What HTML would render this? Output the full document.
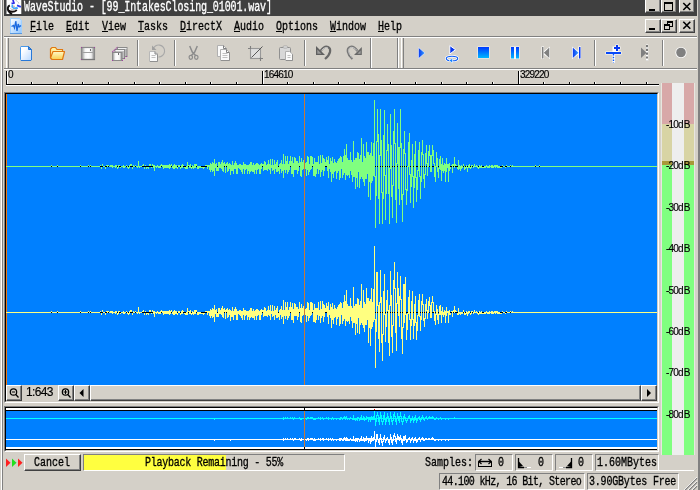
<!DOCTYPE html>
<html>
<head>
<meta charset="utf-8">
<title>WaveStudio</title>
<style>
html,body{margin:0;padding:0}
body{width:700px;height:490px;overflow:hidden;background:#d4d0c8;position:relative;font-family:"Liberation Sans",sans-serif}
.a{position:absolute}
.g{position:absolute;will-change:transform;font:10px/10px "Liberation Mono",monospace;white-space:pre;transform:scaleY(1.3);transform-origin:0 0;color:#000;-webkit-text-stroke:0.25px currentColor}
.s{position:absolute;will-change:transform;font:10px/10px "Liberation Sans",sans-serif;white-space:pre;color:#000;letter-spacing:-0.8px;-webkit-text-stroke:0.15px #000}
.btn{position:absolute;background:#d4d0c8;box-sizing:border-box;border:1px solid;border-color:#fff #404040 #404040 #fff;box-shadow:inset -1px -1px 0 #808080}
.sunk{position:absolute;box-sizing:border-box;border:1px solid;border-color:#808080 #fff #fff #808080}
</style>
</head>
<body>
<!-- window frame -->
<div class="a" style="left:1px;top:0;width:1px;height:490px;background:#fff"></div>
<div class="a" style="left:2px;top:0;width:1px;height:490px;background:#808080"></div>
<div class="a" style="left:698px;top:0;width:2px;height:490px;background:#808080"></div>

<!-- title bar -->
<div class="a" id="title" style="left:4px;top:0;width:693px;height:16px;background:#404040"></div>
<div class="g" style="left:24px;top:1px;color:#fff;letter-spacing:-0.1px;transform:scaleY(1.38)">WaveStudio - [99_IntakesClosing_01001.wav]</div>
<!-- title buttons -->
<div class="btn" style="left:645px;top:-2px;width:16px;height:15px"></div>
<div class="btn" style="left:661px;top:-2px;width:16px;height:15px"></div>
<div class="btn" style="left:679px;top:-2px;width:16px;height:15px"></div>

<!-- menu bar -->
<div class="g" style="left:30px;top:21px">File  Edit  View  Tasks  DirectX  Audio  Options  Window  Help</div>
<div class="a" style="left:30px;top:31px;width:6px;height:1px;background:#000"></div><div class="a" style="left:66px;top:31px;width:6px;height:1px;background:#000"></div><div class="a" style="left:102px;top:31px;width:6px;height:1px;background:#000"></div><div class="a" style="left:138px;top:31px;width:6px;height:1px;background:#000"></div><div class="a" style="left:180px;top:31px;width:6px;height:1px;background:#000"></div><div class="a" style="left:234px;top:31px;width:6px;height:1px;background:#000"></div><div class="a" style="left:276px;top:31px;width:6px;height:1px;background:#000"></div><div class="a" style="left:330px;top:31px;width:6px;height:1px;background:#000"></div><div class="a" style="left:378px;top:31px;width:6px;height:1px;background:#000"></div>
<div class="btn" style="left:645px;top:19px;width:16px;height:14px"></div>
<div class="btn" style="left:661px;top:19px;width:16px;height:14px"></div>
<div class="btn" style="left:679px;top:19px;width:16px;height:14px"></div>
<div class="a" style="left:4px;top:36px;width:693px;height:1px;background:#808080"></div>
<div class="a" style="left:4px;top:37px;width:693px;height:1px;background:#fff"></div>

<!-- toolbar -->
<div class="a" style="left:4px;top:68px;width:693px;height:1px;background:#808080"></div>
<div class="a" style="left:4px;top:69px;width:693px;height:1px;background:#fff"></div>

<svg class="a" id="topsvg" style="left:0;top:0" width="700" height="70" viewBox="0 0 700 70">
<defs>
<linearGradient id="gdoc" x1="0" y1="0" x2="1" y2="1"><stop offset="0.25" stop-color="#fff"/><stop offset="1" stop-color="#b8d8ff"/></linearGradient>
<linearGradient id="gfold" x1="0" y1="0" x2="0" y2="1"><stop offset="0" stop-color="#fffac8"/><stop offset="1" stop-color="#f8d050"/></linearGradient>
<linearGradient id="gblue" x1="0" y1="0" x2="0" y2="1"><stop offset="0" stop-color="#0038ff"/><stop offset="1" stop-color="#00b8ff"/></linearGradient>
<linearGradient id="gblueh" x1="0" y1="0" x2="1" y2="0"><stop offset="0" stop-color="#0838f0"/><stop offset="1" stop-color="#38a0ff"/></linearGradient>
<linearGradient id="ggrey" x1="0" y1="0" x2="1" y2="0"><stop offset="0" stop-color="#8c8c8c"/><stop offset="0.28" stop-color="#f4f4f4"/><stop offset="0.5" stop-color="#fff"/><stop offset="0.75" stop-color="#f0f0f0"/><stop offset="1" stop-color="#808080"/></linearGradient>
<linearGradient id="gmdoc" x1="0" y1="0" x2="1" y2="1"><stop offset="0" stop-color="#ffffff"/><stop offset="1" stop-color="#8cc4ff"/></linearGradient>
</defs>
<!-- title icon -->
<g id="ticon">
<rect x="6.5" y="0" width="14.8" height="14" fill="#fff"/>
<path d="M9.8 5.3 C7.5 6.5 7.3 9 8.6 11 C9.5 12.5 11 13.5 12 14" fill="none" stroke="#101010" stroke-width="2"/>
<path d="M8 10.3 C11 12.3 14.5 12 16.8 10" fill="none" stroke="#181010" stroke-width="1.9"/>
<path d="M10.5 8.5 C12 10 14 10.3 15.5 9.7" fill="none" stroke="#b0b0b0" stroke-width="1"/>
<path d="M12.8 0 L13.8 2 M11.5 3.3 L14.8 2.8" fill="none" stroke="#2828e8" stroke-width="1.7"/>
<path d="M17 5.3 L20.8 6.8" fill="none" stroke="#3040f0" stroke-width="1.8"/>
<path d="M16 0.3 L19.5 3.8" fill="none" stroke="#a8a8a8" stroke-width="1" stroke-dasharray="1 0.6"/>
<path d="M12.5 4.5 L12.2 6.8 L14 8.3 L16.5 7.8 L18 8.5" fill="none" stroke="#40a8ff" stroke-width="1.7"/>
<circle cx="14" cy="6.5" r="0.9" fill="#d0b0a0"/>
</g>
<!-- menu doc icon -->
<g id="micon">
<path d="M10.5 18.5 H19.5 L21.5 20.5 V33.5 H10.5 Z" fill="url(#gmdoc)" stroke="#a0d0ff" stroke-width="1"/>
<path d="M10 33.5 H22" stroke="#5898e0" stroke-width="1"/>
<path d="M11.5 26.5 L13.5 25.5 L14.5 28 L15.8 21 L17 31 L18.2 24 L19.2 27 L21 25.5" fill="none" stroke="#1868e0" stroke-width="1.3"/>
</g>
<!-- caption buttons glyphs -->
<g fill="#000" shape-rendering="crispEdges">
<rect x="649" y="9" width="6" height="2"/>
<path d="M664 2h9v9h-9z M665 4v6h7v-6z" fill-rule="evenodd"/>
<rect x="649" y="28" width="6" height="2"/>
<path d="M667 21h6v6h-6z M668 23v3h4v-3z" fill-rule="evenodd"/>
<rect x="664" y="24" width="6" height="6" fill="#d4d0c8"/>
<path d="M664 24h6v6h-6z M665 26v3h4v-3z" fill-rule="evenodd"/>
</g>
<g stroke="#000" stroke-width="1.6" fill="none">
<path d="M683.3 3 l7 7 M690.3 3 l-7 7"/>
<path d="M683.3 21.8 l7 7 M690.3 21.8 l-7 7"/>
</g>
<!-- toolbar grippers/separators -->
<g shape-rendering="crispEdges">
<rect x="6" y="38" width="1" height="30" fill="#fff"/><rect x="8" y="38" width="1" height="30" fill="#808080"/>
<rect x="370" y="38" width="1" height="30" fill="#808080"/><rect x="371" y="38" width="1" height="30" fill="#fff"/>
<rect x="397" y="38" width="1" height="30" fill="#808080"/><rect x="398" y="38" width="1" height="30" fill="#fff"/>
<rect x="401" y="38" width="1" height="30" fill="#fff"/><rect x="403" y="38" width="1" height="30" fill="#808080"/>
<g id="seps">
<rect x="137" y="40" width="1" height="26" fill="#808080"/><rect x="138" y="40" width="1" height="26" fill="#fff"/>
<rect x="174" y="40" width="1" height="26" fill="#808080"/><rect x="175" y="40" width="1" height="26" fill="#fff"/>
<rect x="304" y="40" width="1" height="26" fill="#808080"/><rect x="305" y="40" width="1" height="26" fill="#fff"/>
<rect x="594" y="40" width="1" height="26" fill="#808080"/><rect x="595" y="40" width="1" height="26" fill="#fff"/>
<rect x="662" y="40" width="1" height="26" fill="#808080"/><rect x="663" y="40" width="1" height="26" fill="#fff"/>
</g>
</g>
<!-- new -->
<path d="M21 46.5 H28.5 L31.5 49.5 V59.5 Q31.5 60.5 30.5 60.5 H21.5 Q20.5 60.5 20.5 59.5 V47.5 Q20.5 46.5 21.5 46.5 Z" fill="url(#gdoc)" stroke="#4898e8" stroke-width="1"/>
<path d="M28.5 46.5 V49.5 H31.5 Z" fill="#4890e8" stroke="#2070d0" stroke-width="1"/>
<path d="M21 60.5 H31 M31.5 50 V60" stroke="#2878d8" stroke-width="1" fill="none"/>
<!-- open -->
<path d="M50.5 58 V49 L52 47.5 H55.5 L57 49.5 H62.5 V52" fill="#fff0a0" stroke="#e07810" stroke-width="1.2"/>
<path d="M52 59.5 L50.5 58 L53 51.5 H64.5 L62.5 59.5 Z" fill="url(#gfold)" stroke="#e07810" stroke-width="1.2" stroke-linejoin="round"/>
<!-- save -->
<g id="save">
<rect x="81.5" y="47.5" width="13" height="12" fill="url(#ggrey)" stroke="#8a8a8a" stroke-width="1.2"/>
<path d="M82 52.5 H94" stroke="#a0a0a0" stroke-width="1"/><path d="M81 59.5 H95" stroke="#787878" stroke-width="1.2"/>
<rect x="90" y="49" width="1" height="2" fill="#707070"/>
<rect x="81" y="47" width="1" height="1" fill="#a040a0"/><rect x="94" y="47" width="1" height="1" fill="#a040a0"/><rect x="81" y="59" width="1" height="1" fill="#a040a0"/>
</g>
<!-- save all -->
<g id="saveall">
<rect x="117.5" y="47.5" width="9.5" height="9" fill="#b8b8b8" stroke="#8a8a8a"/>
<path d="M118 48.5 H126.5" stroke="#f0f0f0"/>
<rect x="115" y="49.5" width="9.5" height="9" fill="#c0c0c0" stroke="#8a8a8a"/>
<path d="M115.5 50.5 H124" stroke="#f4f4f4"/>
<rect x="112.5" y="52.5" width="9.5" height="8" fill="url(#ggrey)" stroke="#8a8a8a"/>
<path d="M112.5 52 L117.5 47" stroke="#a040a0" stroke-width="1.2" stroke-dasharray="1 0.7"/>
<rect x="118" y="53" width="1" height="2" fill="#707070"/>
<rect x="126" y="56" width="1" height="1" fill="#a040a0"/><rect x="124" y="58" width="1" height="1" fill="#a040a0"/><rect x="112" y="60" width="1" height="1" fill="#a040a0"/><rect x="122" y="60" width="1" height="1" fill="#a040a0"/>
</g>
<!-- revert -->
<g id="revert" fill="none">
<path d="M152.8 49.5 A6 6 0 1 1 158.4 57" stroke="#a8a8a8" stroke-width="1.1"/>
<path d="M152 45.5 V50 H156.5 Z" fill="#a0a0a0"/>
<path d="M149.5 51.5 H155 L157.5 54 V61.5 H149.5 Z" fill="#fafafa" stroke="#b8b8b8"/>
<path d="M150 61.5 H157.5 V54.5" stroke="#909090"/>
<path d="M151.5 55.5 H155.5 M151.5 57.5 H155.5" stroke="#c0c0c0"/>
<path d="M155 51.5 V54 H157.5" stroke="#808080"/>
</g>
<!-- cut -->
<g id="cut" fill="none" stroke="#8c8c8c">
<path d="M189.7 46 L192.3 52 L195.6 55.5 M197.3 46 L194.7 52 L191.4 55.5" stroke-width="1.5"/>
<ellipse cx="190.8" cy="57.3" rx="1.7" ry="2" stroke-width="1.2"/><ellipse cx="196.3" cy="57.3" rx="1.7" ry="2" stroke-width="1.2"/>
</g>
<!-- copy -->
<g id="copy">
<path d="M217.5 45.5 H223.5 L226.5 48.5 V56.5 H217.5 Z" fill="#fafafa" stroke="#b0b0b0"/>
<path d="M223.5 45.5 V48.5 H226.5" fill="none" stroke="#808080"/>
<path d="M220.5 49.5 H226.5 L229.5 52.5 V60.5 H220.5 Z" fill="#fafafa" stroke="#b0b0b0"/>
<path d="M226.5 49.5 V52.5 H229.5" fill="none" stroke="#808080"/>
<path d="M221 60.5 H229.5 V53" fill="none" stroke="#909090"/>
<path d="M222.5 53.5 H227.5 M222.5 55.5 H227.5 M222.5 57.5 H227.5" stroke="#c0c0c0"/>
</g>
<!-- crop -->
<g id="crop" fill="none">
<rect x="250.5" y="48.5" width="10" height="10" fill="#dedede" stroke="#989898" stroke-width="1.1"/>
<path d="M248 48.5 H251 M250.5 46 V49 M259.5 58.5 H263 M260.5 57.5 V61" stroke="#808080" stroke-width="1.1"/>
<path d="M251.5 57.5 L262.5 46.5" stroke="#585858" stroke-width="1"/>
</g>
<!-- paste -->
<g id="paste">
<rect x="279.5" y="47.5" width="11" height="12" rx="1" fill="#d8d8d8" stroke="#909090"/>
<rect x="283" y="46" width="4.5" height="2" rx="1" fill="#eee" stroke="#a0a0a0" stroke-width="0.8"/>
<path d="M285.5 51.5 H289.5 L292.5 54 V60.5 H285.5 Z" fill="#fafafa" stroke="#b0b0b0"/>
<path d="M286 60.5 H292.5 V54.5" fill="none" stroke="#909090"/>
<path d="M287.5 55.5 H290.5 M287.5 57.5 H290.5" stroke="#c0c0c0"/>
</g>
<!-- undo -->
<g id="undo">
<path d="M316 46 V55 H325 Z" fill="#606060"/>
<path d="M317.3 49.5 V53.7 H321.5 Z" fill="#9a9a9a"/>
<path d="M320.5 51 C323 47.5 326 46.2 328 47 C331.5 48.5 331 54 325 59" fill="none" stroke="#686868" stroke-width="2.2"/>
<path d="M321.5 50.5 C323.5 47.900 326 47 327.800 47.700" fill="none" stroke="#e0e0e0" stroke-width="0.8"/>
</g>
<!-- redo -->
<g id="redo">
<path d="M361.8 47 V55 H354 Z" fill="#686868"/>
<path d="M360.6 50.5 V53.8 H357.4 Z" fill="#a0a0a0"/>
<path d="M357.5 51 C355 47.5 352 46.2 350 47 C346.5 48.5 347 54 352.5 59" fill="none" stroke="#787878" stroke-width="2.3"/>
<path d="M357 50.5 C355 47.8 352 46.8 350.2 47.6 C347.5 49 348 53.5 352.8 58.3" fill="none" stroke="#e8e8e8" stroke-width="0.7"/>
</g>
<!-- play -->
<path d="M418.5 47.5 V58.5 L425 53 Z" fill="url(#gblueh)" stroke="#e8f0ff" stroke-width="0.6"/>
<!-- play loop -->
<g id="ploop">
<path d="M449.8 45.5 V54 L455.5 49.7 Z" fill="#0838f0" stroke="#fff" stroke-width="1"/>
<ellipse cx="452" cy="58.5" rx="5.7" ry="2.3" fill="none" stroke="#fff" stroke-width="2.6"/>
<ellipse cx="452" cy="58.5" rx="5.7" ry="2.3" fill="none" stroke="#1060f8" stroke-width="1.1"/>
<path d="M449 60.5 L452.5 58.3 V63 Z" fill="#1080ff" stroke="#fff" stroke-width="0.6"/>
</g>
<!-- stop -->
<rect x="477.5" y="46.5" width="12" height="12" fill="#fff" opacity="0.85"/>
<rect x="478" y="47" width="11" height="11" fill="url(#gblue)"/>
<!-- pause -->
<rect x="510.5" y="46.5" width="9" height="12.5" fill="#fff" opacity="0.85"/>
<rect x="511" y="47" width="3" height="11.5" fill="url(#gblue)"/><rect x="516" y="47" width="3" height="11.5" fill="url(#gblue)"/>
<!-- prev -->
<g id="prev">
<path d="M541.5 46.5 H544 V51 L550 46.5 V59 L544 54.5 V59 H541.5 Z" fill="#fff"/>
<rect x="542" y="47" width="1.5" height="11.5" fill="#808080"/>
<path d="M549.3 47.5 V58 L543.8 52.8 Z" fill="#808080"/>
</g>
<!-- next -->
<g id="next">
<path d="M572 46.5 L578.3 51 V46.5 H581 V59 H578.3 V54.5 L572 59 Z" fill="#fff"/>
<path d="M572.8 47.5 V58 L578.5 52.8 Z" fill="url(#gblueh)"/>
<rect x="579" y="47" width="1.5" height="11.5" fill="#0838f0"/>
</g>
<!-- add marker -->
<g id="addm">
<path d="M605.5 51.5 H612.5 V46.5 H615.5 V44.5 H618.5 V46.5 H620.5 V49.5 H618.5 V51.5 H621.5 V54.5 H615 V63 H612.5 V54.5 H605.5 Z" fill="#fff"/>
<rect x="606" y="52" width="15" height="2" fill="#0848f8"/>
<rect x="614" y="47" width="6" height="2" fill="#0838f0"/><rect x="616" y="45" width="2" height="6" fill="#0838f0"/>
<path d="M613.5 54 V62.5" stroke="#0858ff" stroke-width="1.400" stroke-dasharray="1.5 1.2"/>
</g>
<!-- marker disabled -->
<g id="mark">
<path d="M641 47.5 V58 L646.5 52.8 Z" fill="#808080"/>
<rect x="646" y="44.5" width="2.2" height="16.5" fill="#fff"/>
<path d="M647 45 V60.5" stroke="#202020" stroke-width="1.2" stroke-dasharray="2.2 1.6"/>
</g>
<!-- record -->
<circle cx="681" cy="52.5" r="5.6" fill="#fff"/>
<circle cx="681" cy="52.5" r="4.8" fill="#808080"/>
</svg>
<!-- ruler -->
<div class="a" id="ruler" style="left:0;top:70px;width:700px;height:18px">
<div class="a" style="left:6px;top:14px;width:653px;height:1px;background:#000"></div>
<div class="a" style="left:6px;top:15px;width:653px;height:1px;background:#fff"></div>
<div class="a" style="left:6px;top:1px;width:1px;height:13px;background:#000"></div>
<div class="a" style="left:7px;top:1px;width:1px;height:13px;background:#fff"></div>
<div class="a" style="left:31px;top:12px;width:1px;height:2px;background:#000"></div>
<div class="a" style="left:32px;top:12px;width:1px;height:2px;background:#fff"></div>
<div class="a" style="left:57px;top:12px;width:1px;height:2px;background:#000"></div>
<div class="a" style="left:58px;top:12px;width:1px;height:2px;background:#fff"></div>
<div class="a" style="left:82px;top:12px;width:1px;height:2px;background:#000"></div>
<div class="a" style="left:83px;top:12px;width:1px;height:2px;background:#fff"></div>
<div class="a" style="left:108px;top:12px;width:1px;height:2px;background:#000"></div>
<div class="a" style="left:109px;top:12px;width:1px;height:2px;background:#fff"></div>
<div class="a" style="left:134px;top:12px;width:1px;height:2px;background:#000"></div>
<div class="a" style="left:135px;top:12px;width:1px;height:2px;background:#fff"></div>
<div class="a" style="left:159px;top:12px;width:1px;height:2px;background:#000"></div>
<div class="a" style="left:160px;top:12px;width:1px;height:2px;background:#fff"></div>
<div class="a" style="left:185px;top:12px;width:1px;height:2px;background:#000"></div>
<div class="a" style="left:186px;top:12px;width:1px;height:2px;background:#fff"></div>
<div class="a" style="left:210px;top:12px;width:1px;height:2px;background:#000"></div>
<div class="a" style="left:211px;top:12px;width:1px;height:2px;background:#fff"></div>
<div class="a" style="left:236px;top:12px;width:1px;height:2px;background:#000"></div>
<div class="a" style="left:237px;top:12px;width:1px;height:2px;background:#fff"></div>
<div class="a" style="left:262px;top:1px;width:1px;height:13px;background:#000"></div>
<div class="a" style="left:263px;top:1px;width:1px;height:13px;background:#fff"></div>
<div class="a" style="left:287px;top:12px;width:1px;height:2px;background:#000"></div>
<div class="a" style="left:288px;top:12px;width:1px;height:2px;background:#fff"></div>
<div class="a" style="left:313px;top:12px;width:1px;height:2px;background:#000"></div>
<div class="a" style="left:314px;top:12px;width:1px;height:2px;background:#fff"></div>
<div class="a" style="left:338px;top:12px;width:1px;height:2px;background:#000"></div>
<div class="a" style="left:339px;top:12px;width:1px;height:2px;background:#fff"></div>
<div class="a" style="left:364px;top:12px;width:1px;height:2px;background:#000"></div>
<div class="a" style="left:365px;top:12px;width:1px;height:2px;background:#fff"></div>
<div class="a" style="left:390px;top:12px;width:1px;height:2px;background:#000"></div>
<div class="a" style="left:391px;top:12px;width:1px;height:2px;background:#fff"></div>
<div class="a" style="left:415px;top:12px;width:1px;height:2px;background:#000"></div>
<div class="a" style="left:416px;top:12px;width:1px;height:2px;background:#fff"></div>
<div class="a" style="left:441px;top:12px;width:1px;height:2px;background:#000"></div>
<div class="a" style="left:442px;top:12px;width:1px;height:2px;background:#fff"></div>
<div class="a" style="left:466px;top:12px;width:1px;height:2px;background:#000"></div>
<div class="a" style="left:467px;top:12px;width:1px;height:2px;background:#fff"></div>
<div class="a" style="left:492px;top:12px;width:1px;height:2px;background:#000"></div>
<div class="a" style="left:493px;top:12px;width:1px;height:2px;background:#fff"></div>
<div class="a" style="left:518px;top:1px;width:1px;height:13px;background:#000"></div>
<div class="a" style="left:519px;top:1px;width:1px;height:13px;background:#fff"></div>
<div class="a" style="left:543px;top:12px;width:1px;height:2px;background:#000"></div>
<div class="a" style="left:544px;top:12px;width:1px;height:2px;background:#fff"></div>
<div class="a" style="left:569px;top:12px;width:1px;height:2px;background:#000"></div>
<div class="a" style="left:570px;top:12px;width:1px;height:2px;background:#fff"></div>
<div class="a" style="left:594px;top:12px;width:1px;height:2px;background:#000"></div>
<div class="a" style="left:595px;top:12px;width:1px;height:2px;background:#fff"></div>
<div class="a" style="left:620px;top:12px;width:1px;height:2px;background:#000"></div>
<div class="a" style="left:621px;top:12px;width:1px;height:2px;background:#fff"></div>
<div class="a" style="left:646px;top:12px;width:1px;height:2px;background:#000"></div>
<div class="a" style="left:647px;top:12px;width:1px;height:2px;background:#fff"></div>
<div class="s" style="left:8px;top:0px;">0</div>
<div class="s" style="left:264px;top:0px;">164610</div>
<div class="s" style="left:520px;top:0px;">329220</div>
</div>

<!-- main wave frame -->
<div class="a" style="left:4px;top:92px;width:655px;height:311px;box-sizing:border-box;border:1px solid;border-color:#808080 #fff #fff #808080"></div>
<div class="a" style="left:5px;top:93px;width:653px;height:309px;box-sizing:border-box;border:1px solid;border-color:#000 #d4d0c8 #d4d0c8 #000"></div>
<svg class="a" id="wavesvg" style="left:6px;top:94px" width="651" height="291" viewBox="0 0 651 291" shape-rendering="crispEdges">
<rect width="651" height="291" fill="#0080ff"/>
<rect x="0" y="0" width="1" height="291" fill="#f07810"/>
<rect x="1" y="72" width="650" height="1" fill="#000"/>
<rect x="1" y="218" width="650" height="1" fill="#000"/>
<path d="M0.5 72V73M1.5 72V73M2.5 72V73M3.5 72V73M4.5 72V73M5.5 72V73M6.5 72V73M7.5 72V73M8.5 72V73M9.5 72V73M10.5 72V73M11.5 72V73M12.5 72V73M13.5 72V73M14.5 72V73M15.5 72V73M16.5 72V73M17.5 72V73M18.5 72V73M19.5 72V73M20.5 72V73M21.5 72V73M22.5 72V73M23.5 72V73M24.5 72V73M25.5 72V73M26.5 72V73M27.5 72V73M28.5 72V73M29.5 72V73M30.5 72V73M31.5 72V73M32.5 72V73M33.5 72V73M34.5 72V73M35.5 72V73M36.5 72V73M37.5 72V73M38.5 72V73M39.5 72V73M40.5 72V73M41.5 72V73M42.5 72V73M43.5 72V73M44.5 72V73M45.5 71V72M46.5 72V73M47.5 72V73M48.5 72V73M49.5 72V73M50.5 72V73M51.5 71V72M52.5 72V73M53.5 72V73M54.5 72V73M55.5 72V73M56.5 72V73M57.5 72V73M58.5 72V73M59.5 72V73M60.5 72V73M61.5 72V73M62.5 72V73M63.5 72V73M64.5 72V73M65.5 72V73M66.5 72V73M67.5 72V73M68.5 72V73M69.5 72V73M70.5 72V73M71.5 72V73M72.5 72V73M73.5 72V73M74.5 71V72M75.5 72V73M76.5 72V73M77.5 72V73M78.5 72V73M79.5 72V73M80.5 72V73M81.5 72V73M82.5 71V72M83.5 72V73M84.5 71V72M85.5 72V73M86.5 72V73M87.5 72V73M88.5 72V73M89.5 72V73M90.5 72V73M91.5 72V73M92.5 72V73M93.5 72V73M94.5 71V72M95.5 73V75M96.5 70V72M97.5 72V73M98.5 72V73M99.5 73V75M100.5 71V72M101.5 71V73M102.5 71V72M103.5 72V73M104.5 71V73M105.5 71V73M106.5 71V74M107.5 72V73M108.5 72V73M109.5 71V74M110.5 71V73M111.5 73V75M112.5 71V74M113.5 71V72M114.5 73V74M115.5 72V73M116.5 72V73M117.5 71V74M118.5 72V74M119.5 72V73M120.5 71V72M121.5 72V74M122.5 73V75M123.5 71V74M124.5 70V72M125.5 70V72M126.5 73V75M127.5 71V73M128.5 72V73M129.5 71V72M130.5 72V73M131.5 72V74M132.5 67V73M133.5 72V74M134.5 72V73M135.5 72V73M136.5 71V72M137.5 70V72M138.5 73V75M139.5 71V72M140.5 73V75M141.5 73V74M142.5 73V75M143.5 70V72M144.5 70V72M145.5 73V74M146.5 70V72M147.5 71V74M148.5 71V77M149.5 72V73M150.5 72V74M151.5 71V73M152.5 72V74M153.5 72V74M154.5 71V74M155.5 70V72M156.5 71V73M157.5 71V75M158.5 71V74M159.5 71V74M160.5 71V74M161.5 71V74M162.5 71V74M163.5 70V75M164.5 71V74M165.5 70V72M166.5 72V74M167.5 71V75M168.5 70V75M169.5 71V74M170.5 71V74M171.5 73V75M172.5 71V73M173.5 71V73M174.5 73V75M175.5 71V74M176.5 70V74M177.5 71V72M178.5 73V74M179.5 73V75M180.5 72V75M181.5 68V75M182.5 71V72M183.5 71V74M184.5 70V74M185.5 73V75M186.5 71V74M187.5 72V75M188.5 70V74M189.5 70V74M190.5 70V72M191.5 72V75M192.5 72V75M193.5 72V74M194.5 72V74M195.5 73V74M196.5 73V74M197.5 73V75M198.5 73V74M199.5 71V72M200.5 71V72M201.5 71V75M202.5 71V73M203.5 71V76M204.5 69V78M205.5 70V76M206.5 68V78M207.5 69V77M208.5 65V82M209.5 70V74M210.5 69V77M211.5 73V77M212.5 68V77M213.5 68V74M214.5 70V74M215.5 68V75M216.5 66V77M217.5 69V78M218.5 68V72M219.5 70V79M220.5 69V72M221.5 68V78M222.5 70V77M223.5 69V75M224.5 70V81M225.5 71V77M226.5 67V77M227.5 71V80M228.5 69V75M229.5 67V75M230.5 69V80M231.5 71V80M232.5 71V74M233.5 70V75M234.5 70V76M235.5 71V78M236.5 71V80M237.5 68V75M238.5 70V80M239.5 70V76M240.5 71V75M241.5 71V80M242.5 71V77M243.5 70V80M244.5 68V78M245.5 68V77M246.5 71V78M247.5 69V78M248.5 71V80M249.5 70V76M250.5 69V80M251.5 69V76M252.5 70V75M253.5 71V80M254.5 70V80M255.5 69V75M256.5 70V72M257.5 70V77M258.5 67V76M259.5 68V76M260.5 71V76M261.5 70V77M262.5 66V75M263.5 70V76M264.5 65V80M265.5 71V74M266.5 65V77M267.5 71V76M268.5 66V80M269.5 70V75M270.5 68V78M271.5 66V78M272.5 73V77M273.5 70V80M274.5 69V75M275.5 66V79M276.5 70V77M277.5 60V84M278.5 70V76M279.5 62V79M280.5 67V76M281.5 62V80M282.5 70V78M283.5 67V76M284.5 62V72M285.5 67V80M286.5 63V80M287.5 69V83M288.5 63V76M289.5 64V76M290.5 67V76M291.5 67V80M292.5 69V77M293.5 62V72M294.5 68V82M295.5 64V83M296.5 68V76M297.5 66V75M298.5 62V77M299.5 69V75M300.5 68V82M301.5 62V76M302.5 63V81M303.5 70V78M304.5 62V76M305.5 62V75M306.5 63V72M307.5 70V82M308.5 64V82M309.5 68V83M310.5 68V80M311.5 68V75M312.5 62V80M313.5 70V76M314.5 61V83M315.5 69V78M316.5 61V76M317.5 64V82M318.5 65V77M319.5 68V72M320.5 63V72M321.5 66V77M322.5 62V84M323.5 70V75M324.5 64V78M325.5 67V88M326.5 63V80M327.5 69V84M328.5 65V78M329.5 68V77M330.5 69V85M331.5 67V79M332.5 65V77M333.5 64V86M334.5 62V84M335.5 63V75M336.5 68V84M337.5 62V81M338.5 55V79M339.5 61V86M340.5 50V81M341.5 64V82M342.5 66V81M343.5 66V84M344.5 58V77M345.5 66V81M346.5 68V88M347.5 47V83M348.5 66V83M349.5 64V95M350.5 64V84M351.5 58V93M352.5 59V78M353.5 65V94M354.5 61V85M355.5 44V83M356.5 68V85M357.5 50V88M358.5 62V92M359.5 64V85M360.5 48V85M361.5 58V80M362.5 58V103M363.5 61V88M364.5 59V106M365.5 48V89M366.5 62V87M367.5 49V82M368.5 6V83M369.5 82V134M370.5 47V102M371.5 15V48M372.5 40V105M373.5 61V130M374.5 15V62M375.5 46V99M376.5 98V130M377.5 41V105M378.5 16V82M379.5 81V126M380.5 56V100M381.5 30V57M382.5 50V100M383.5 74V130M384.5 20V75M385.5 51V103M386.5 91V124M387.5 37V92M388.5 15V50M389.5 49V106M390.5 69V129M391.5 29V70M392.5 53V95M393.5 53V111M394.5 15V54M395.5 49V106M396.5 100V128M397.5 55V101M398.5 37V60M399.5 59V96M400.5 95V111M401.5 72V97M402.5 48V73M403.5 39V81M404.5 80V109M405.5 66V93M406.5 50V83M407.5 82V114M408.5 60V94M409.5 47V84M410.5 83V108M411.5 76V96M412.5 56V77M413.5 48V83M414.5 82V105M415.5 58V88M416.5 46V61M417.5 60V85M418.5 80V94M419.5 59V81M420.5 51V70M421.5 69V82M422.5 57V73M423.5 51V62M424.5 61V78M425.5 61V78M426.5 51V62M427.5 56V70M428.5 69V83M429.5 72V88M430.5 58V73M431.5 64V78M432.5 74V84M433.5 65V75M434.5 62V76M435.5 70V87M436.5 64V77M437.5 71V79M438.5 69V77M439.5 70V88M440.5 64V78M441.5 70V74M442.5 70V88M443.5 69V77M444.5 73V75M445.5 71V72M446.5 70V79M447.5 70V72M448.5 63V74M449.5 70V72M450.5 71V72M451.5 73V75M452.5 66V76M453.5 71V75M454.5 72V77M455.5 71V75M456.5 72V74M457.5 70V72M458.5 72V76M459.5 73V75M460.5 71V74M461.5 73V78M462.5 71V74M463.5 70V74M464.5 73V75M465.5 71V74M466.5 71V72M467.5 72V74M468.5 70V73M469.5 72V73M470.5 71V73M471.5 72V74M472.5 73V75M473.5 71V74M474.5 72V74M475.5 71V74M476.5 73V74M477.5 73V74M478.5 72V74M479.5 72V74M480.5 71V73M481.5 72V74M482.5 72V74M483.5 71V74M484.5 72V73M485.5 71V74M486.5 71V74M487.5 72V74M488.5 71V73M489.5 71V74M490.5 71V73M491.5 71V74M492.5 72V74M493.5 72V74M494.5 73V74M495.5 73V74M496.5 71V72M497.5 72V73M498.5 72V73M499.5 73V74M500.5 71V72M501.5 72V73M502.5 72V73M503.5 72V73M504.5 71V72M505.5 72V73M506.5 71V73M507.5 72V73M508.5 72V73M509.5 72V73M510.5 72V73M511.5 72V73M512.5 72V73M513.5 72V73M514.5 72V73M515.5 72V73M516.5 72V73M517.5 72V73M518.5 72V73M519.5 72V73M520.5 72V73M521.5 72V73M522.5 72V73M523.5 72V73M524.5 72V73M525.5 72V73M526.5 72V73M527.5 72V73M528.5 72V73M529.5 71V72M530.5 72V73M531.5 72V73M532.5 72V73M533.5 71V72M534.5 72V73M535.5 72V73M536.5 72V73M537.5 72V73M538.5 72V73M539.5 72V73M540.5 72V73M541.5 72V73M542.5 72V73M543.5 72V73M544.5 72V73M545.5 72V73M546.5 72V73M547.5 72V73M548.5 72V73M549.5 72V73M550.5 72V73M551.5 72V73M552.5 72V73M553.5 72V73M554.5 72V73M555.5 72V73M556.5 72V73M557.5 72V73M558.5 72V73M559.5 72V73M560.5 72V73M561.5 72V73M562.5 72V73M563.5 72V73M564.5 72V73M565.5 72V73M566.5 72V73M567.5 72V73M568.5 72V73M569.5 72V73M570.5 72V73M571.5 72V73M572.5 72V73M573.5 72V73M574.5 72V73M575.5 72V73M576.5 72V73M577.5 72V73M578.5 72V73M579.5 72V73M580.5 72V73M581.5 72V73M582.5 72V73M583.5 72V73M584.5 72V73M585.5 72V73M586.5 72V73M587.5 72V73M588.5 72V73M589.5 72V73M590.5 72V73M591.5 72V73M592.5 72V73M593.5 72V73M594.5 72V73M595.5 72V73M596.5 72V73M597.5 72V73M598.5 72V73M599.5 72V73M600.5 72V73M601.5 72V73M602.5 72V73M603.5 72V73M604.5 72V73M605.5 72V73M606.5 72V73M607.5 72V73M608.5 72V73M609.5 72V73M610.5 72V73M611.5 72V73M612.5 72V73M613.5 72V73M614.5 72V73M615.5 72V73M616.5 72V73M617.5 72V73M618.5 72V73M619.5 72V73M620.5 72V73M621.5 72V73M622.5 72V73M623.5 72V73M624.5 72V73M625.5 72V73M626.5 72V73M627.5 72V73M628.5 72V73M629.5 72V73M630.5 72V73M631.5 72V73M632.5 72V73M633.5 72V73M634.5 72V73M635.5 72V73M636.5 72V73M637.5 72V73M638.5 72V73M639.5 72V73M640.5 72V73M641.5 72V73M642.5 72V73M643.5 72V73M644.5 72V73M645.5 72V73M646.5 72V73M647.5 72V73M648.5 72V73M649.5 72V73M650.5 72V73" stroke="#80ff80" stroke-width="1" fill="none"/>
<path d="M0.5 218V219M1.5 218V219M2.5 218V219M3.5 218V219M4.5 218V219M5.5 218V219M6.5 218V219M7.5 218V219M8.5 218V219M9.5 218V219M10.5 218V219M11.5 218V219M12.5 218V219M13.5 218V219M14.5 218V219M15.5 218V219M16.5 218V219M17.5 218V219M18.5 218V219M19.5 218V219M20.5 218V219M21.5 218V219M22.5 218V219M23.5 218V219M24.5 218V219M25.5 218V219M26.5 218V219M27.5 218V219M28.5 218V219M29.5 218V219M30.5 218V219M31.5 218V219M32.5 218V219M33.5 218V219M34.5 218V219M35.5 218V219M36.5 218V219M37.5 218V219M38.5 218V219M39.5 218V219M40.5 218V219M41.5 218V219M42.5 218V219M43.5 218V219M44.5 218V219M45.5 217V218M46.5 218V219M47.5 218V219M48.5 218V219M49.5 218V219M50.5 218V219M51.5 217V218M52.5 218V219M53.5 218V219M54.5 218V219M55.5 218V219M56.5 218V219M57.5 218V219M58.5 218V219M59.5 218V219M60.5 218V219M61.5 218V219M62.5 218V219M63.5 218V219M64.5 218V219M65.5 218V219M66.5 218V219M67.5 218V219M68.5 218V219M69.5 218V219M70.5 218V219M71.5 218V219M72.5 218V219M73.5 218V219M74.5 217V218M75.5 218V219M76.5 218V219M77.5 218V219M78.5 218V219M79.5 218V219M80.5 218V219M81.5 218V219M82.5 217V218M83.5 218V219M84.5 217V218M85.5 218V219M86.5 218V219M87.5 218V219M88.5 218V219M89.5 218V219M90.5 218V219M91.5 218V219M92.5 218V219M93.5 218V219M94.5 217V218M95.5 219V221M96.5 216V218M97.5 218V219M98.5 218V219M99.5 219V221M100.5 217V218M101.5 217V219M102.5 217V218M103.5 218V219M104.5 217V219M105.5 217V219M106.5 217V220M107.5 218V219M108.5 218V219M109.5 217V220M110.5 217V219M111.5 219V221M112.5 217V220M113.5 217V218M114.5 219V220M115.5 218V219M116.5 218V219M117.5 217V220M118.5 218V220M119.5 218V219M120.5 217V218M121.5 218V220M122.5 219V221M123.5 217V220M124.5 216V218M125.5 216V218M126.5 219V221M127.5 217V219M128.5 218V219M129.5 217V218M130.5 218V219M131.5 218V220M132.5 213V219M133.5 218V220M134.5 218V219M135.5 218V219M136.5 217V218M137.5 216V218M138.5 219V221M139.5 217V218M140.5 219V221M141.5 219V220M142.5 219V221M143.5 216V218M144.5 216V218M145.5 219V220M146.5 216V218M147.5 217V220M148.5 217V223M149.5 218V219M150.5 218V220M151.5 217V219M152.5 218V220M153.5 218V220M154.5 217V220M155.5 216V218M156.5 217V219M157.5 217V221M158.5 217V220M159.5 217V220M160.5 217V220M161.5 217V220M162.5 217V220M163.5 216V221M164.5 217V220M165.5 216V218M166.5 218V220M167.5 217V221M168.5 216V221M169.5 217V220M170.5 217V220M171.5 219V221M172.5 217V219M173.5 217V219M174.5 219V221M175.5 217V220M176.5 216V220M177.5 217V218M178.5 219V220M179.5 219V221M180.5 218V221M181.5 214V221M182.5 217V218M183.5 217V220M184.5 216V220M185.5 219V221M186.5 217V220M187.5 218V221M188.5 216V220M189.5 216V220M190.5 216V218M191.5 218V221M192.5 218V221M193.5 218V220M194.5 218V220M195.5 219V220M196.5 219V220M197.5 219V221M198.5 219V220M199.5 217V218M200.5 217V218M201.5 217V221M202.5 217V219M203.5 217V222M204.5 215V224M205.5 216V222M206.5 214V224M207.5 215V223M208.5 211V228M209.5 216V220M210.5 215V223M211.5 219V223M212.5 214V223M213.5 214V220M214.5 216V220M215.5 214V221M216.5 212V223M217.5 215V224M218.5 214V218M219.5 216V225M220.5 215V218M221.5 214V224M222.5 216V223M223.5 215V221M224.5 216V227M225.5 217V223M226.5 213V223M227.5 217V226M228.5 215V221M229.5 213V221M230.5 215V226M231.5 217V226M232.5 217V220M233.5 216V221M234.5 216V222M235.5 217V224M236.5 217V226M237.5 214V221M238.5 216V226M239.5 216V222M240.5 217V221M241.5 217V226M242.5 217V223M243.5 216V226M244.5 214V224M245.5 214V223M246.5 217V224M247.5 215V224M248.5 217V226M249.5 216V222M250.5 215V226M251.5 215V222M252.5 216V221M253.5 217V226M254.5 216V226M255.5 215V221M256.5 216V218M257.5 216V223M258.5 213V222M259.5 214V222M260.5 217V222M261.5 216V223M262.5 212V221M263.5 216V222M264.5 211V226M265.5 217V220M266.5 211V223M267.5 217V222M268.5 212V226M269.5 216V221M270.5 214V224M271.5 212V224M272.5 219V223M273.5 216V226M274.5 215V221M275.5 212V225M276.5 216V223M277.5 206V230M278.5 216V222M279.5 208V225M280.5 213V222M281.5 208V226M282.5 216V224M283.5 213V222M284.5 208V218M285.5 213V226M286.5 209V226M287.5 215V229M288.5 209V222M289.5 210V222M290.5 213V222M291.5 213V226M292.5 215V223M293.5 208V218M294.5 214V228M295.5 210V229M296.5 214V222M297.5 212V221M298.5 208V223M299.5 215V221M300.5 214V228M301.5 208V222M302.5 209V227M303.5 216V224M304.5 208V222M305.5 208V221M306.5 209V218M307.5 216V228M308.5 210V228M309.5 214V229M310.5 214V226M311.5 214V221M312.5 208V226M313.5 216V222M314.5 207V229M315.5 215V224M316.5 207V222M317.5 210V228M318.5 211V223M319.5 214V218M320.5 209V218M321.5 212V223M322.5 208V230M323.5 216V221M324.5 210V224M325.5 213V234M326.5 209V226M327.5 215V230M328.5 211V224M329.5 214V223M330.5 215V231M331.5 213V225M332.5 211V223M333.5 210V232M334.5 208V230M335.5 209V221M336.5 214V230M337.5 208V227M338.5 201V225M339.5 207V232M340.5 196V227M341.5 210V228M342.5 212V227M343.5 212V230M344.5 204V223M345.5 212V227M346.5 214V234M347.5 193V229M348.5 212V229M349.5 210V241M350.5 210V230M351.5 204V239M352.5 205V224M353.5 211V240M354.5 207V231M355.5 190V229M356.5 214V231M357.5 196V234M358.5 208V238M359.5 210V231M360.5 194V231M361.5 204V226M362.5 204V249M363.5 207V234M364.5 205V252M365.5 194V235M366.5 208V233M367.5 195V228M368.5 152V226M369.5 225V274M370.5 178V238M371.5 178V212M372.5 211V245M373.5 208V258M374.5 176V209M375.5 203V249M376.5 240V267M377.5 197V241M378.5 180V221M379.5 220V248M380.5 206V233M381.5 196V217M382.5 216V249M383.5 211V262M384.5 177V212M385.5 201V243M386.5 231V259M387.5 186V232M388.5 168V195M389.5 194V239M390.5 209V257M391.5 178V210M392.5 194V222M393.5 202V233M394.5 182V206M395.5 205V245M396.5 233V260M397.5 190V234M398.5 190V229M399.5 183V221M400.5 220V246M401.5 219V236M402.5 203V220M403.5 196V226M404.5 225V246M405.5 207V232M406.5 197V226M407.5 225V245M408.5 210V232M409.5 202V229M410.5 228V246M411.5 221V237M412.5 206V222M413.5 200V223M414.5 222V237M415.5 207V226M416.5 200V211M417.5 210V227M418.5 224V233M419.5 210V225M420.5 205V217M421.5 216V225M422.5 207V219M423.5 203V212M424.5 211V224M425.5 208V224M426.5 202V209M427.5 208V218M428.5 217V227M429.5 220V231M430.5 211V221M431.5 215V226M432.5 220V230M433.5 212V221M434.5 211V221M435.5 217V229M436.5 213V221M437.5 218V223M438.5 216V221M439.5 217V229M440.5 213V222M441.5 217V219M442.5 217V229M443.5 216V221M444.5 219V221M445.5 217V218M446.5 217V223M447.5 216V218M448.5 212V219M449.5 216V218M450.5 217V218M451.5 219V221M452.5 214V221M453.5 218V220M454.5 218V221M455.5 218V220M456.5 218V220M457.5 216V218M458.5 218V221M459.5 219V221M460.5 217V220M461.5 218V222M462.5 217V220M463.5 217V219M464.5 219V221M465.5 217V220M466.5 217V218M467.5 218V220M468.5 216V219M469.5 218V219M470.5 217V219M471.5 218V220M472.5 219V221M473.5 217V220M474.5 218V220M475.5 217V220M476.5 219V220M477.5 219V220M478.5 218V220M479.5 218V220M480.5 217V219M481.5 218V220M482.5 218V220M483.5 217V220M484.5 218V219M485.5 217V220M486.5 217V220M487.5 218V220M488.5 217V219M489.5 217V220M490.5 217V219M491.5 217V220M492.5 218V220M493.5 218V220M494.5 219V220M495.5 219V220M496.5 217V218M497.5 218V219M498.5 218V219M499.5 219V220M500.5 217V218M501.5 218V219M502.5 218V219M503.5 218V219M504.5 217V218M505.5 218V219M506.5 217V219M507.5 218V219M508.5 218V219M509.5 218V219M510.5 218V219M511.5 218V219M512.5 218V219M513.5 218V219M514.5 218V219M515.5 218V219M516.5 218V219M517.5 218V219M518.5 218V219M519.5 218V219M520.5 218V219M521.5 218V219M522.5 218V219M523.5 218V219M524.5 218V219M525.5 218V219M526.5 218V219M527.5 218V219M528.5 218V219M529.5 218V219M530.5 218V219M531.5 218V219M532.5 218V219M533.5 218V219M534.5 218V219M535.5 218V219M536.5 218V219M537.5 218V219M538.5 218V219M539.5 218V219M540.5 218V219M541.5 218V219M542.5 218V219M543.5 218V219M544.5 218V219M545.5 218V219M546.5 218V219M547.5 218V219M548.5 218V219M549.5 218V219M550.5 218V219M551.5 218V219M552.5 218V219M553.5 218V219M554.5 218V219M555.5 218V219M556.5 218V219M557.5 218V219M558.5 218V219M559.5 218V219M560.5 218V219M561.5 218V219M562.5 218V219M563.5 218V219M564.5 218V219M565.5 218V219M566.5 218V219M567.5 218V219M568.5 218V219M569.5 218V219M570.5 218V219M571.5 218V219M572.5 218V219M573.5 218V219M574.5 218V219M575.5 218V219M576.5 218V219M577.5 218V219M578.5 218V219M579.5 218V219M580.5 218V219M581.5 218V219M582.5 218V219M583.5 218V219M584.5 218V219M585.5 218V219M586.5 218V219M587.5 218V219M588.5 218V219M589.5 218V219M590.5 218V219M591.5 218V219M592.5 218V219M593.5 218V219M594.5 218V219M595.5 218V219M596.5 218V219M597.5 218V219M598.5 218V219M599.5 218V219M600.5 218V219M601.5 218V219M602.5 218V219M603.5 218V219M604.5 218V219M605.5 218V219M606.5 218V219M607.5 218V219M608.5 218V219M609.5 218V219M610.5 218V219M611.5 218V219M612.5 218V219M613.5 218V219M614.5 218V219M615.5 218V219M616.5 218V219M617.5 218V219M618.5 218V219M619.5 218V219M620.5 218V219M621.5 218V219M622.5 218V219M623.5 218V219M624.5 218V219M625.5 218V219M626.5 218V219M627.5 218V219M628.5 218V219M629.5 218V219M630.5 218V219M631.5 218V219M632.5 218V219M633.5 218V219M634.5 218V219M635.5 218V219M636.5 218V219M637.5 218V219M638.5 218V219M639.5 218V219M640.5 218V219M641.5 218V219M642.5 218V219M643.5 218V219M644.5 218V219M645.5 218V219M646.5 218V219M647.5 218V219M648.5 218V219M649.5 218V219M650.5 218V219" stroke="#ffff80" stroke-width="1" fill="none"/>
<rect x="298" y="0" width="1" height="291" fill="#c87838"/>
</svg>

<!-- scroll row -->
<div class="btn" style="left:6px;top:385px;width:16px;height:16px"></div>
<div class="s" style="left:26px;top:386px;font-size:12px;line-height:12px;letter-spacing:-0.67px">1:643</div>
<div class="btn" style="left:58px;top:385px;width:16px;height:16px"></div>
<div class="btn" style="left:74px;top:385px;width:16px;height:16px"></div>
<div class="btn" style="left:90px;top:385px;width:551px;height:16px"></div>
<div class="btn" style="left:641px;top:385px;width:16px;height:16px"></div>

<!-- overview -->
<!--ovframe-->
<div class="a" style="left:4px;top:406px;width:655px;height:46px;box-sizing:border-box;border:1px solid;border-color:#808080 #fff #fff #808080"></div>
<div class="a" style="left:5px;top:407px;width:653px;height:44px;box-sizing:border-box;border:1px solid;border-color:#000 #d4d0c8 #d4d0c8 #000"></div>
<svg class="a" id="ovsvg" style="left:6px;top:408px" width="651" height="42" viewBox="0 0 651 42" shape-rendering="crispEdges">
<rect width="651" height="42" fill="#fff"/>
<rect y="2" width="651" height="1" fill="#000"/>
<rect y="41" width="651" height="1" fill="#000"/>
<rect y="3" width="651" height="36" fill="#0080ff"/>
<rect y="10" width="651" height="1" fill="#00ffff"/>
<rect y="31" width="651" height="1" fill="#fff"/>
<path d="M208.5 10V12M277.5 9V12M279.5 9V11M281.5 9V11M284.5 9V11M286.5 9V11M287.5 10V12M288.5 9V11M293.5 9V11M294.5 10V12M295.5 10V12M298.5 9V11M300.5 10V12M301.5 9V11M302.5 9V11M304.5 9V11M305.5 9V11M306.5 9V11M307.5 10V12M308.5 10V12M309.5 10V12M312.5 9V11M314.5 9V12M316.5 9V11M317.5 10V12M320.5 9V11M322.5 9V12M325.5 10V12M326.5 9V11M327.5 10V12M330.5 10V12M333.5 10V12M334.5 9V12M335.5 9V11M336.5 10V12M337.5 9V11M338.5 8V11M339.5 9V12M340.5 8V11M341.5 10V12M343.5 10V12M344.5 9V11M346.5 10V12M347.5 7V12M348.5 10V12M349.5 10V13M350.5 10V12M351.5 9V13M352.5 9V11M353.5 10V13M354.5 9V12M355.5 7V12M356.5 10V12M357.5 8V12M358.5 9V13M359.5 10V12M360.5 8V12M361.5 9V11M362.5 9V14M363.5 9V12M364.5 9V14M365.5 8V12M366.5 9V12M367.5 8V12M368.5 3V12M369.5 11V18M370.5 7V14M371.5 4V8M372.5 7V14M373.5 9V17M374.5 4V10M375.5 7V14M376.5 13V17M377.5 7V14M378.5 4V12M379.5 11V17M380.5 9V14M381.5 5V10M382.5 8V14M383.5 10V17M384.5 4V11M385.5 8V14M386.5 12V17M387.5 6V13M388.5 4V9M389.5 8V14M390.5 10V17M391.5 5V11M392.5 8V13M393.5 8V15M394.5 4V9M395.5 8V14M396.5 13V17M397.5 8V14M398.5 6V10M399.5 9V13M400.5 12V15M401.5 10V13M402.5 8V11M403.5 7V11M404.5 10V15M405.5 10V13M406.5 8V12M407.5 11V15M408.5 9V13M409.5 7V12M410.5 11V15M411.5 10V13M412.5 9V11M413.5 8V12M414.5 11V14M415.5 9V12M416.5 7V10M417.5 9V12M418.5 10V13M419.5 9V11M420.5 8V11M421.5 10V12M422.5 9V11M423.5 8V10M424.5 9V11M425.5 9V11M426.5 8V10M427.5 9V11M428.5 10V12M429.5 10V12M430.5 9V11M432.5 10V12M434.5 9V11M435.5 10V12M439.5 10V12M442.5 10V12M448.5 9V11" stroke="#00ffff" stroke-width="1" fill="none"/>
<path d="M208.5 31V33M224.5 31V33M277.5 30V33M279.5 30V32M281.5 30V32M284.5 30V32M286.5 30V32M287.5 31V33M288.5 30V32M289.5 30V32M293.5 30V32M294.5 31V33M295.5 30V33M298.5 30V32M300.5 31V33M301.5 30V32M302.5 30V33M304.5 30V32M305.5 30V32M306.5 30V32M307.5 31V33M308.5 30V33M309.5 31V33M312.5 30V32M314.5 30V33M316.5 30V32M317.5 30V33M320.5 30V32M322.5 30V33M324.5 30V32M325.5 31V33M326.5 30V32M327.5 31V33M330.5 31V33M333.5 30V33M334.5 30V33M335.5 30V32M336.5 31V33M337.5 30V33M338.5 29V32M339.5 30V33M340.5 29V33M341.5 30V33M342.5 31V33M343.5 31V33M344.5 30V32M345.5 31V33M346.5 31V33M347.5 28V33M348.5 31V33M349.5 30V34M350.5 30V33M351.5 30V34M352.5 30V32M353.5 31V34M354.5 30V33M355.5 28V33M356.5 31V33M357.5 29V33M358.5 30V34M359.5 30V33M360.5 28V33M361.5 30V32M362.5 30V35M363.5 30V33M364.5 30V36M365.5 28V34M366.5 30V33M367.5 29V33M368.5 23V32M369.5 31V39M370.5 26V34M371.5 26V32M372.5 31V35M373.5 30V37M374.5 26V31M375.5 30V35M376.5 33V38M377.5 29V34M378.5 27V32M379.5 31V35M380.5 30V33M381.5 29V32M382.5 31V35M383.5 31V37M384.5 26V32M385.5 29V35M386.5 32V37M387.5 27V33M388.5 25V29M389.5 28V34M390.5 30V36M391.5 26V31M392.5 28V32M393.5 29V33M394.5 27V31M395.5 30V35M396.5 32V37M397.5 28V33M398.5 28V33M399.5 27V32M400.5 31V35M401.5 31V34M402.5 30V32M403.5 29V32M404.5 31V35M405.5 30V33M406.5 29V32M407.5 31V35M408.5 30V33M409.5 29V33M410.5 32V35M411.5 31V34M412.5 30V32M413.5 29V32M414.5 31V34M415.5 30V32M416.5 29V31M417.5 30V33M418.5 31V33M419.5 30V32M420.5 30V32M422.5 30V32M423.5 30V32M425.5 30V32M426.5 29V31M427.5 30V32M428.5 31V33M429.5 31V33M432.5 31V33M435.5 31V33M439.5 31V33M442.5 31V33" stroke="#fff" stroke-width="1" fill="none"/>
<rect x="298" y="0" width="1" height="42" fill="#c87838"/>
<rect x="298" y="0" width="1" height="3" fill="#000"/>
<rect x="298" y="39" width="1" height="3" fill="#000"/>
<rect x="368" y="1" width="1" height="1" fill="#e00000"/>
</svg>

<!-- meter -->
<div class="a" style="left:661px;top:83px;width:1px;height:372px;background:#e8e6e0"></div>
<div class="a" style="left:694px;top:83px;width:1px;height:372px;background:#e8e6e0"></div>
<div class="a" id="meter" style="left:662px;top:83px;width:32px;height:372px;background:#80ff80">
<div class="a" style="left:0;top:0;width:32px;height:41px;background:#d8a8a8"></div>
<div class="a" style="left:0;top:41px;width:32px;height:37px;background:#d8d4a4"></div>
<div class="a" style="left:0;top:78px;width:32px;height:4px;background:#a89838"></div>
<div class="a" style="left:10px;top:0;width:12px;height:372px;background:#eee"></div>
<div class="s" style="left:4px;top:37px">-10d<span style="margin-left:1px">B</span></div>
<div class="s" style="left:4px;top:78px">-20d<span style="margin-left:1px">B</span></div>
<div class="s" style="left:4px;top:120px">-30d<span style="margin-left:1px">B</span></div>
<div class="s" style="left:4px;top:161px">-40d<span style="margin-left:1px">B</span></div>
<div class="s" style="left:4px;top:203px">-50d<span style="margin-left:1px">B</span></div>
<div class="s" style="left:4px;top:244px">-60d<span style="margin-left:1px">B</span></div>
<div class="s" style="left:4px;top:285px">-70d<span style="margin-left:1px">B</span></div>
<div class="s" style="left:4px;top:327px">-80d<span style="margin-left:1px">B</span></div>
</div>

<!-- status -->
<div class="btn" style="left:24px;top:454px;width:57px;height:17px"></div>
<div class="g" style="left:34px;top:457px">Cancel</div>
<div class="sunk" style="left:83px;top:454px;width:262px;height:17px"></div>
<div class="a" style="left:84px;top:455px;width:142px;height:15px;background:#ffff40"></div>
<div class="g" style="left:145px;top:457px;letter-spacing:-0.25px">Playback Remaining - 55%</div>
<div class="g" style="left:425px;top:457px">Samples:</div>
<div class="sunk" style="left:475px;top:454px;width:38px;height:17px"></div>
<div class="sunk" style="left:515px;top:454px;width:38px;height:17px"></div>
<div class="sunk" style="left:555px;top:454px;width:38px;height:17px"></div>
<div class="sunk" style="left:595px;top:454px;width:64px;height:17px"></div>
<div class="a" style="left:658px;top:470px;width:36px;height:1px;background:#fff"></div>
<div class="sunk" style="left:439px;top:473px;width:146px;height:17px"></div>
<div class="sunk" style="left:587px;top:473px;width:92px;height:17px"></div>
<div class="g" style="left:498px;top:457px">0</div>
<div class="g" style="left:538px;top:457px">0</div>
<div class="g" style="left:578px;top:457px">0</div>
<div class="g" style="left:597px;top:457px">1.60MBytes</div>
<div class="g" style="left:442px;top:476px;letter-spacing:-0.65px">44.100 kHz, 16 Bit, Stereo</div>
<div class="g" style="left:589px;top:476px;letter-spacing:-0.19px">3.90GBytes Free</div>
<svg class="a" id="botsvg" style="left:0;top:384px" width="700" height="106" viewBox="0 384 700 106">
<!-- zoom out -->
<g fill="none" stroke="#000" stroke-width="1.2">
<circle cx="13.5" cy="392" r="3.2"/><path d="M15.8 394.5 L18.5 397.5"/><path d="M11.8 392 H15.2" stroke-width="1"/>
<circle cx="65.5" cy="392" r="3.2"/><path d="M67.8 394.5 L70.5 397.5"/><path d="M63.5 392 H67.5 M65.5 390 V394" stroke-width="1"/>
</g>
<path d="M83.5 389 V397 L79.5 393 Z" fill="#000"/>
<path d="M647 389 V397 L651 393 Z" fill="#000"/>
<!-- status arrows -->
<path d="M6 458.5 V467 L10.5 462.7 Z" fill="#ff2020"/>
<path d="M12 458.5 V467 L16.5 462.7 Z" fill="#20e020"/>
<path d="M18 458.5 V467 L22.5 462.7 Z" fill="#ff2020"/>
<!-- sample icons -->
<g fill="none" stroke="#000" stroke-width="1" shape-rendering="crispEdges">
<path d="M478.5 462 V466.5 H491.5 V462"/>
</g>
<path d="M478.5 461.5 H491.5" stroke="#000" stroke-width="1.4"/>
<path d="M481.5 459 L478.8 461.5 L481.5 464 M488.5 459 L491.2 461.5 L488.5 464" stroke="#000" stroke-width="1.2" fill="none"/>
<path d="M518.5 458 V467.5 H524" stroke="#000" stroke-width="1.3" fill="none"/>
<path d="M524 467.5 H527" stroke="#909090" stroke-width="1"/><path d="M527 467.5 H531" stroke="#fff" stroke-width="1"/>
<path d="M519 461.5 L523 466 L519 467 Z" fill="#000"/>
<path d="M571.5 458 V467.5 H566" stroke="#000" stroke-width="1.3" fill="none"/>
<path d="M566 467.5 H563" stroke="#909090" stroke-width="1"/><path d="M563 467.5 H559" stroke="#fff" stroke-width="1"/>
<path d="M571 461.5 L567 466 L571 467 Z" fill="#000"/>
<!-- size grip -->
<g stroke-width="1">
<path d="M697 478 L685 490 M697 482 L689 490 M697 486 L693 490" stroke="#808080" stroke-width="1.4"/>
<path d="M697 477 L684 490 M697 481 L688 490 M697 485 L692 490" stroke="#fff" stroke-width="0.8"/>
</g>
</svg>
</body>
</html>
